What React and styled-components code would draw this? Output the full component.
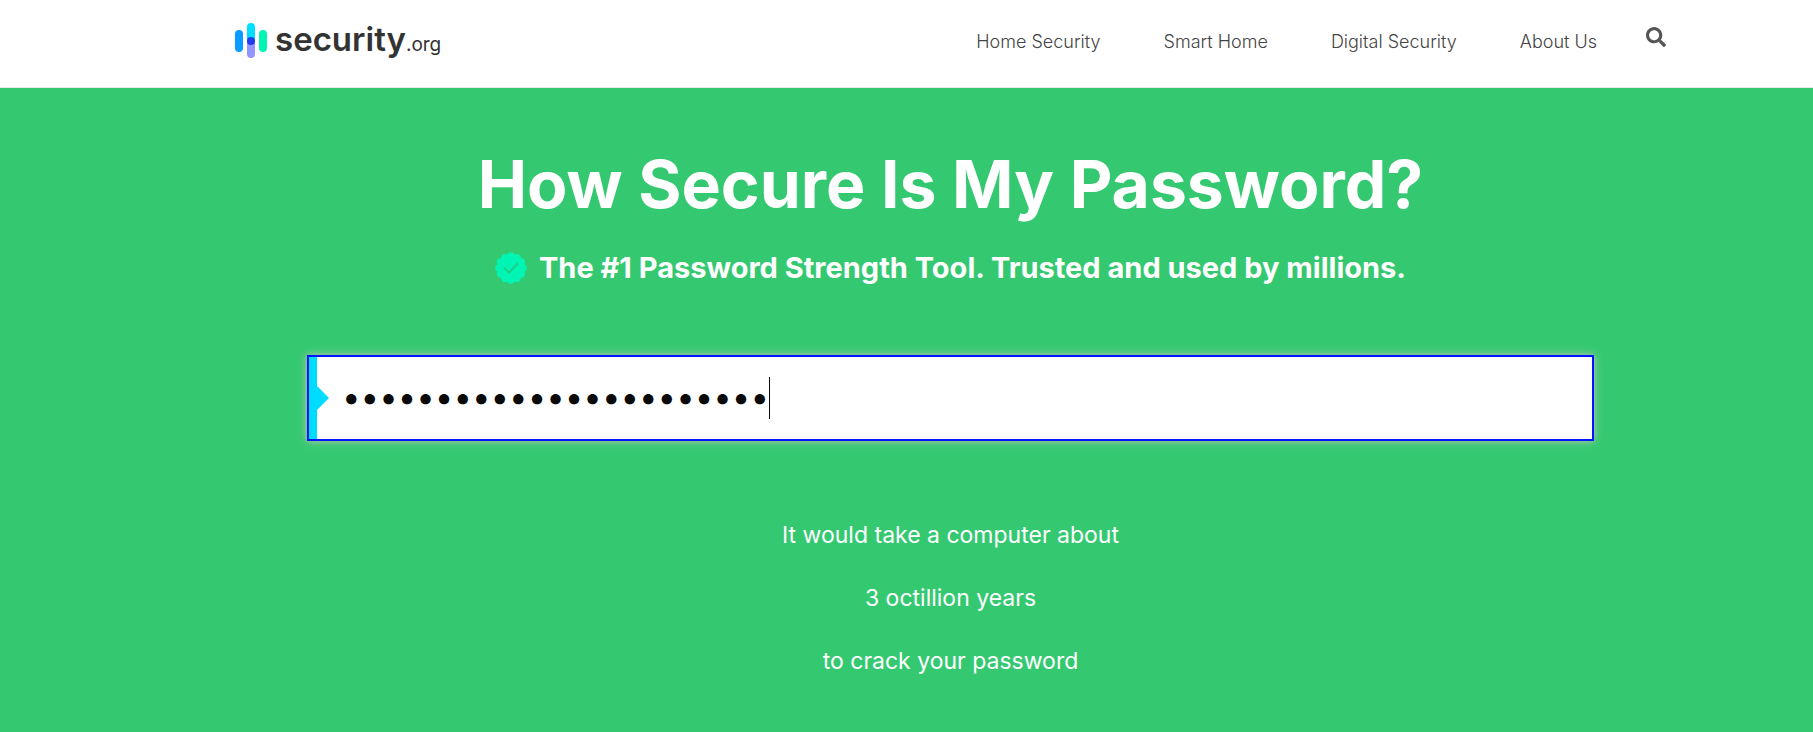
import React, { useState } from "react";
import styled, { createGlobalStyle } from "styled-components";
import { FaSearch } from "react-icons/fa";

const GlobalStyle = createGlobalStyle`
  *, *::before, *::after { box-sizing: border-box; }
  body {
    margin: 0;
    background: #34c971;
    font-family: Inter, "Open Sans", sans-serif;
  }
`;

const Page = styled.div`
  display: flex;
  flex-direction: column;
  min-height: 100vh;
`;

const Header = styled.header`
  display: flex;
  justify-content: center;
  padding: 0 60px 0 148px;
  background: #fff;
  border-bottom: 1px solid #e9ecef;
`;

const HeaderInner = styled.div`
  display: flex;
  align-items: flex-start;
  justify-content: space-between;
  width: 100%;
  max-width: 1431px;
  height: 87px;
`;

const Brand = styled.a`
  display: flex;
  align-items: flex-start;
  gap: 7px;
  margin-top: 22px;
  color: #333;
  text-decoration: none;
`;

const BrandMark = styled.svg`
  display: block;
  width: 33px;
  height: 37px;
`;

const BrandText = styled.span`
  font-size: 33px;
  line-height: 34px;
  font-weight: 600;
`;

const BrandSuffix = styled.span`
  font-size: 19px;
  font-weight: 400;
`;

const Nav = styled.nav`
  display: flex;
  align-items: flex-start;
  gap: 49px;
`;

const NavList = styled.ul`
  display: flex;
  gap: 63px;
  margin: 0;
  padding: 0;
  list-style: none;
`;

const NavLink = styled.a`
  display: block;
  margin-top: 30px;
  font-size: 18px;
  line-height: 24px;
  font-weight: 300;
  color: #444;
  text-decoration: none;
`;

const SearchButton = styled.button`
  display: block;
  margin: 27px 0 0;
  padding: 0;
  border: 0;
  background: none;
  color: #555;
  font-size: 20px;
  line-height: 0;
  cursor: pointer;
`;

const Hero = styled.main`
  flex: 1;
  display: flex;
  flex-direction: column;
  align-items: center;
  padding: 58px 60px 48px 148px;
  background: #34c971;
  color: #fff;
  text-align: center;
`;

const Title = styled.h1`
  margin: 0;
  font-size: 66px;
  line-height: 76px;
  font-weight: 700;
`;

const Tagline = styled.p`
  display: flex;
  align-items: center;
  gap: 12px;
  margin: 26px 0 0;
  font-size: 29px;
  line-height: 40px;
  font-weight: 700;
`;

const Badge = styled.svg`
  flex: none;
  width: 32px;
  height: 32px;
`;

const Field = styled.div`
  position: relative;
  width: 100%;
  max-width: 1287px;
  margin-top: 67px;
  border: 2px solid #0014ff;
  background: #fff;
  box-shadow: 0 0 8px #c9c3bd;

  &::before {
    content: "";
    position: absolute;
    inset: 0 auto 0 0;
    width: 8px;
    background: #00dcff;
  }

  &::after {
    content: "";
    position: absolute;
    top: calc(50% - 12px);
    left: 8px;
    border: 12px solid transparent;
    border-right-width: 0;
    border-left-color: #00dcff;
  }
`;

const PasswordInput = styled.input`
  display: block;
  width: 100%;
  height: 82px;
  padding: 0 32px 2px 33px;
  border: 0;
  outline: 0;
  background: transparent;
  color: #0a0a0a;
  caret-color: transparent;
  font-family: Inter, sans-serif;
  font-size: 33px;
`;

const Caret = styled.span`
  position: absolute;
  top: calc(50% - 21px);
  width: 1px;
  height: 42px;
  background: #0a0a0a;
  pointer-events: none;
`;

const Result = styled.div`
  display: flex;
  flex-direction: column;
  gap: 31px;
  margin-top: 78px;
`;

const ResultLine = styled.p`
  margin: 0;
  font-size: 23px;
  line-height: 32px;
  font-weight: 400;
`;

const LINKS = ["Home Security", "Smart Home", "Digital Security", "About Us"];
const RESULT = ["It would take a computer about", "3 octillion years", "to crack your password"];

// Left padding of the field and width of one masking dot, in pixels.
const FIELD_PADDING = 33;
const DOT_WIDTH = 18.55;

const scallops = Array.from({ length: 12 }, (_, i) => {
  const a = (i * Math.PI) / 6 - Math.PI / 2;
  return { x: 16 + 12 * Math.cos(a), y: 16 + 12 * Math.sin(a) };
});

function VerifiedBadge() {
  return (
    <Badge viewBox="0 0 32 32" aria-hidden="true">
      <circle cx="16" cy="16" r="13" fill="#00f5b4" />
      {scallops.map((p, i) => (
        <circle key={i} cx={p.x} cy={p.y} r="3.7" fill="#00f5b4" />
      ))}
      <path d="M9 15.6l5 5 9-9.4" fill="none" stroke="#1fcf87" strokeWidth="2" />
    </Badge>
  );
}

function Logo() {
  return (
    <BrandMark viewBox="0 0 33 37" aria-hidden="true">
      <rect x="0" y="8" width="8" height="22" rx="4" fill="#0a9bff" />
      <rect x="12" y="14" width="8" height="22" rx="4" fill="#9494ff" />
      <path d="M12 5a4 4 0 0 1 8 0v14h-8z" fill="#00dfff" />
      <circle cx="16" cy="19" r="4" fill="#1f3cf0" />
      <rect x="24" y="8" width="8" height="22" rx="4" fill="#00f5b4" />
    </BrandMark>
  );
}

export default function App() {
  const [password, setPassword] = useState("correcthorsebatterystap");
  const caretLeft = Math.round(FIELD_PADDING + password.length * DOT_WIDTH);
  return (
    <Page>
      <GlobalStyle />
      <Header>
        <HeaderInner>
          <Brand href="#">
            <Logo />
            <BrandText>
              security<BrandSuffix>.org</BrandSuffix>
            </BrandText>
          </Brand>
          <Nav>
            <NavList>
              {LINKS.map((label) => (
                <li key={label}>
                  <NavLink href="#">{label}</NavLink>
                </li>
              ))}
            </NavList>
            <SearchButton type="button" aria-label="Search">
              <FaSearch />
            </SearchButton>
          </Nav>
        </HeaderInner>
      </Header>
      <Hero>
        <Title>How Secure Is My Password?</Title>
        <Tagline>
          <VerifiedBadge />
          The #1 Password Strength Tool. Trusted and used by millions.
        </Tagline>
        <Field>
          <PasswordInput
            type="password"
            aria-label="Password"
            autoFocus
            value={password}
            onChange={(e) => setPassword(e.target.value)}
          />
          <Caret style={{ left: caretLeft }} />
        </Field>
        <Result>
          {RESULT.map((line) => (
            <ResultLine key={line}>{line}</ResultLine>
          ))}
        </Result>
      </Hero>
    </Page>
  );
}
